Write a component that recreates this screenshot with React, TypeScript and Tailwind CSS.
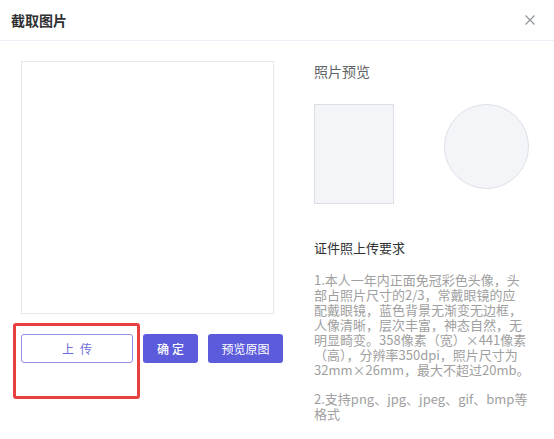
import React from 'react';

const font = { fontFamily: '"Noto Sans CJK SC", "Noto Sans", sans-serif' };

const rules = [
  '1.本人一年内正面免冠彩色头像，头',
  '部占照片尺寸的2/3，常戴眼镜的应',
  '配戴眼镜，蓝色背景无渐变无边框，',
  '人像清晰，层次丰富，神态自然，无',
  '明显畸变。358像素（宽）×441像素',
  '（高），分辨率350dpi，照片尺寸为',
  '32mm×26mm，最大不超过20mb。',
];

export default function App() {
  return (
    <div className="relative w-[554px] h-[439px] bg-white overflow-hidden" style={font}>
      {/* header */}
      <div className="h-[41px] flex items-center justify-between pl-[11px] pr-[19px] border-b border-[#ebeef5]">
        <h1 className="text-[14px] font-bold text-[#303133] leading-[20px]">截取图片</h1>
        <svg width="10" height="10" viewBox="0 0 10 10" className="text-[#909399]">
          <path d="M0.5 0.5 L9.5 9.5 M9.5 0.5 L0.5 9.5" stroke="currentColor" strokeWidth="1.2" fill="none" />
        </svg>
      </div>

      <div className="flex pl-[21px] pt-[20px]">
        {/* cropper */}
        <div className="w-[253px] shrink-0">
          <div className="h-[253px] border border-[#e8e8e8] bg-white" />
          <div className="mt-[20px] flex gap-[10px]">
            <button className="shrink-0 w-[112px] h-[29px] rounded-[3px] border border-[#9290e3] text-[12px] text-[#6f6cd9] tracking-[6px] pl-[6px]">
              上传
            </button>
            <button className="shrink-0 w-[55px] h-[29px] rounded-[3px] bg-[#5b5bdc] text-[12px] font-medium text-white tracking-[3px] pl-[3px]">
              确定
            </button>
            <button className="shrink-0 w-[75px] h-[29px] rounded-[3px] bg-[#5b5bdc] text-[12px] text-white">
              预览原图
            </button>
          </div>
        </div>

        {/* preview + rules */}
        <div className="ml-[40px] w-[225px] shrink-0">
          <h2 className="text-[14px] leading-[20px] text-[#606266]">照片预览</h2>
          <div className="mt-[23px] flex items-start">
            <div className="w-[80px] h-[100px] bg-[#f4f5f9] border border-[#dcdfe6]" />
            <div className="ml-[50px] w-[85px] h-[85px] rounded-full bg-[#f4f5f9] border border-[#dcdfe6]" />
          </div>
          <h3 className="mt-[34px] text-[13px] leading-[20px] text-[#303133]">证件照上传要求</h3>
          <p className="mt-[14px] text-[13px] leading-[15px] text-[#a0a0a0] whitespace-nowrap">
            {rules.map((line) => (
              <span key={line} className="block">{line}</span>
            ))}
          </p>
          <p className="mt-[14px] text-[13px] leading-[15px] text-[#a0a0a0] whitespace-nowrap">
            <span className="block">2.支持png、jpg、jpeg、gif、bmp等</span>
            <span className="block">格式</span>
          </p>
        </div>
      </div>

      {/* annotation box */}
      <div className="absolute left-[13px] top-[323px] w-[127px] h-[76px] border-[3px] border-[#e8403f] rounded-[3px]" />
    </div>
  );
}
